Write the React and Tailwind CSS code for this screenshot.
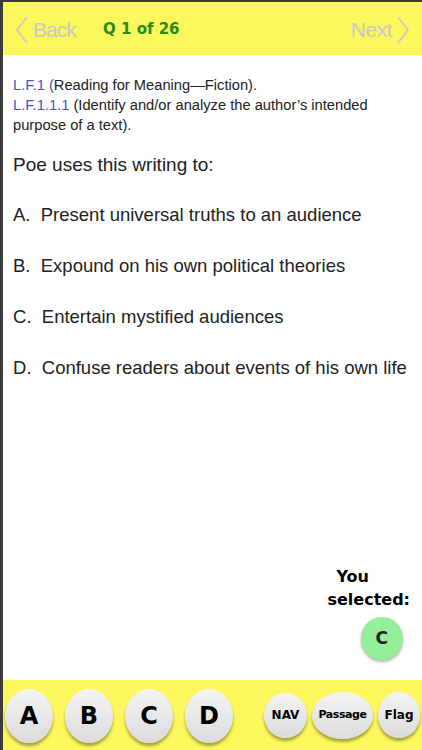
import React from 'react';

const choices = [
  { key: 'A', text: 'Present universal truths to an audience' },
  { key: 'B', text: 'Expound on his own political theories' },
  { key: 'C', text: 'Entertain mystified audiences' },
  { key: 'D', text: 'Confuse readers about events of his own life' },
];

const Chevron = ({ dir }) => (
  <svg width="14" height="30" viewBox="0 0 14 30" fill="none" stroke="#c9c9c9" strokeWidth="1.6">
    {dir === 'left' ? <path d="M12 2 L2 15 L12 28" /> : <path d="M2 2 L12 15 L2 28" />}
  </svg>
);

const RoundBtn = ({ label, className }) => (
  <div
    className={`flex items-center justify-center rounded-[50%] bg-gradient-to-b from-[#f4f4f4] to-[#dcdcdc] shadow-[0_3px_3px_rgba(0,0,0,0.35)] text-black ${className}`}
  >
    {label}
  </div>
);

const App = () => {
  return (
    <div className="flex flex-col h-[750px] w-[422px] bg-white border-l-[3px] border-t-2 border-[#3a3a3a] overflow-hidden font-['Liberation_Sans',Arial,sans-serif]">
      {/* Header */}
      <div className="flex items-center h-[53px] bg-[#fbf75c] px-3 shrink-0">
        <div className="flex items-center gap-1 text-[#c9c9c9] text-[21px] tracking-[-1px] w-[85px] mt-[3px]">
          <Chevron dir="left" />
          <span>Back</span>
        </div>
        <div className="text-[#2a8a17] font-bold text-[15px] font-['DejaVu_Sans',sans-serif] ml-[3px] mt-[1px]">Q 1 of 26</div>
        <div className="ml-auto flex items-center gap-1 text-[#c9c9c9] text-[21px] tracking-[-0.5px] mt-[3px]">
          <span>Next</span>
          <Chevron dir="right" />
        </div>
      </div>

      {/* Question */}
      <main className="flex-1 flex flex-col px-[10px] pt-[20px] text-[#222]">
        <div className="text-[14.7px] leading-[20px]">
          <p>
            <span className="text-[#3b57c9]">L.F.1 (</span>Reading for Meaning—Fiction).
          </p>
          <p>
            <span className="text-[#3b57c9]">L.F.1.1.1</span> <span>(Identify and/or analyze the author’s intended</span>
          </p>
          <p>purpose of a text).</p>
        </div>
        <p className="text-[19px] mt-[16px]">Poe uses this writing to:</p>
        <ul className="mt-[23px] flex flex-col gap-[28px]">
          {choices.map((c) => (
            <li key={c.key} className="text-[18.5px] leading-[23px]">
              {c.key}.&nbsp; {c.text}
            </li>
          ))}
        </ul>

        <div className="mt-auto mb-[20px] self-end flex flex-col items-center mr-[2px]">
          <div className="flex flex-col items-center font-bold text-[16px] leading-[23px] text-black font-['DejaVu_Sans',sans-serif]">
            <span className="pr-[32px]">You</span>
            <span>selected:</span>
          </div>
          <div className="mt-[6px] ml-[26px] w-[42px] h-[43px] rounded-full bg-[#94ef98] shadow-[0_2px_3px_rgba(0,0,0,0.3)] flex items-center justify-center font-bold text-[17px] font-['DejaVu_Sans',sans-serif]">
            C
          </div>
        </div>
      </main>

      {/* Bottom bar */}
      <div className="h-[70px] shrink-0 bg-[#fbf75c] flex items-center pl-[2px] pr-[2px] font-['DejaVu_Sans',sans-serif] font-bold">
        <div className="flex items-center gap-[12px]">
          {choices.map((c) => (
            <RoundBtn key={c.key} label={c.key} className="w-[48px] h-[54px] text-[24px] mt-[2px]" />
          ))}
        </div>
        <div className="ml-auto flex items-center gap-[5px]">
          <RoundBtn label="NAV" className="w-[43px] h-[45px] text-[12px]" />
          <RoundBtn label="Passage" className="w-[61px] h-[47px] text-[11px] tracking-[-0.4px]" />
          <RoundBtn label="Flag" className="w-[42px] h-[46px] text-[12px]" />
        </div>
      </div>
    </div>
  );
};

export default App;
